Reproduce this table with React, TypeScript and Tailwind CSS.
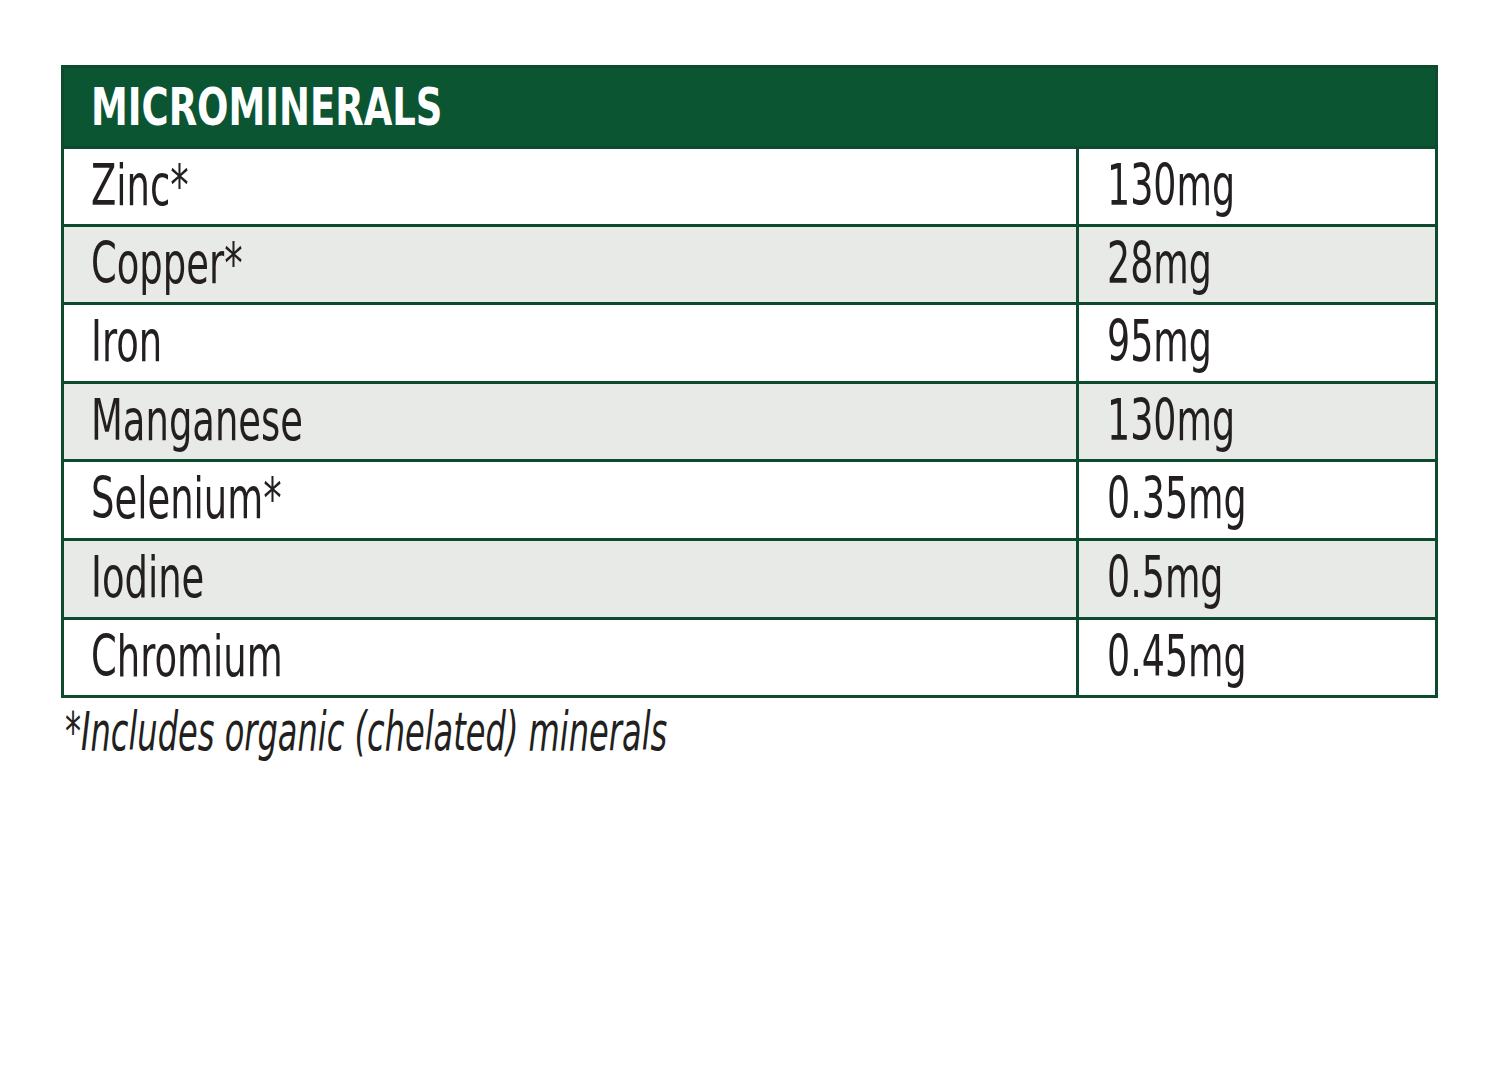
const rows = [
  { name: 'Zinc*', value: '130mg', height: 'h-[78px]' },
  { name: 'Copper*', value: '28mg', height: 'h-[78px]' },
  { name: 'Iron', value: '95mg', height: 'h-[79px]' },
  { name: 'Manganese', value: '130mg', height: 'h-[78px]' },
  { name: 'Selenium*', value: '0.35mg', height: 'h-[79px]' },
  { name: 'Iodine', value: '0.5mg', height: 'h-[79px]' },
  { name: 'Chromium', value: '0.45mg', height: 'h-[78px]' }
];

const font = {
  fontFamily: "'DejaVu Sans Condensed', 'Liberation Sans', sans-serif"
};

const App = () => {
  return (
    <div className="min-h-[1087px] w-[1500px] bg-white pl-[61px] pt-[65px]" style={font}>
      <div className="w-[1377px] border-[3px] border-[#0d4a2e]">
        <div className="flex h-[78px] items-center bg-[#0b5533] pl-[27px]">
          <span className="inline-block origin-left scale-x-[0.79] whitespace-nowrap text-[52px] font-bold leading-none text-white">
            MICROMINERALS
          </span>
        </div>
        {rows.map((row, index) => (
          <div
            key={row.name}
            className={`flex ${row.height} border-t-[3px] border-[#0d4a2e] text-[57px] leading-none text-[#231f20] ${
              index % 2 === 1 ? 'bg-[#e8eae7]' : 'bg-white'
            }`}
          >
            <div className="flex w-[1012px] items-center pb-[3px] pl-[27px]">
              <span className="inline-block origin-left scale-x-[0.72] whitespace-nowrap">{row.name}</span>
            </div>
            <div className="flex flex-1 items-center border-l-[3px] border-[#0d4a2e] pb-[3px] pl-[28px]">
              <span className="inline-block origin-left scale-x-[0.71] whitespace-nowrap">{row.value}</span>
            </div>
          </div>
        ))}
      </div>
      <p className="mt-[7px] pl-[4px] text-[54px] italic leading-none text-[#231f20]">
        <span className="inline-block origin-left scale-x-[0.66] whitespace-nowrap">
          *Includes organic (chelated) minerals
        </span>
      </p>
    </div>
  );
};

export default App;
